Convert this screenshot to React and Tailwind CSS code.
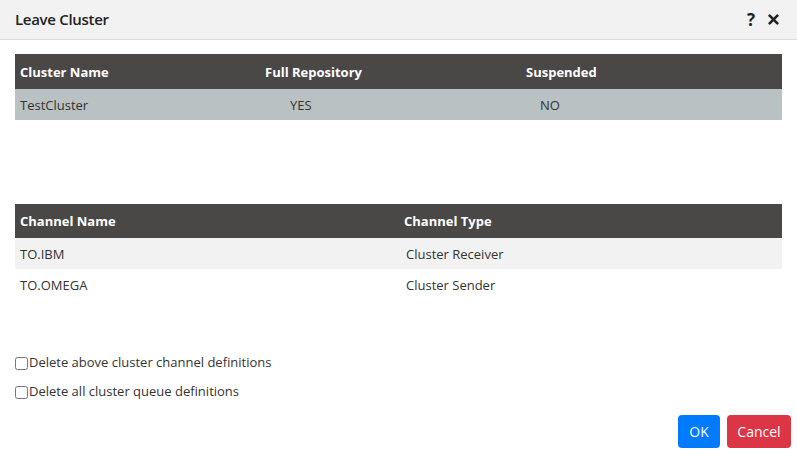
import React, { useState } from 'react';

const clusters = [{ name: 'TestCluster', full: 'YES', suspended: 'NO' }];

const channels = [
  { name: 'TO.IBM', type: 'Cluster Receiver' },
  { name: 'TO.OMEGA', type: 'Cluster Sender' },
];

const LeaveClusterDialog = () => {
  const [deleteChannels, setDeleteChannels] = useState(false);
  const [deleteQueues, setDeleteQueues] = useState(false);

  return (
    <div className="w-[797px] h-[453px] bg-white text-[#333] font-['Open_Sans',sans-serif] flex flex-col">
      {/* --- Title bar --- */}
      <div className="h-[40px] bg-[#f2f2f2] border-b border-[#dcdcdc] flex items-center justify-between pl-[15px] pr-[18px]">
        <h2 className="text-[15px] font-semibold text-[#222] tracking-[-0.3px]">Leave Cluster</h2>
        <div className="flex items-center gap-[13px] text-[#222]">
          <span className="text-[17px] font-bold leading-none">?</span>
          <svg width="11" height="11" viewBox="0 0 10 10">
            <path d="M1.5 1.5 L8.5 8.5 M8.5 1.5 L1.5 8.5" stroke="#222" strokeWidth="2.4" strokeLinecap="round" />
          </svg>
        </div>
      </div>

      {/* --- Cluster table --- */}
      <div className="mx-[15px] mt-[14px] text-[13px]">
        <div className="grid grid-cols-[245px_261px_1fr] h-[35px] items-center pt-[2px] bg-[#4a4747] text-white font-bold">
          <div className="pl-[5px]">Cluster Name</div>
          <div className="pl-[5px]">Full Repository</div>
          <div className="pl-[5px]">Suspended</div>
        </div>
        {clusters.map((c) => (
          <div key={c.name} className="grid grid-cols-[245px_261px_1fr] h-[31px] items-center pt-[3px] bg-[#b9c1c3]">
            <div className="pl-[5px]">{c.name}</div>
            <div className="pl-[30px]">{c.full}</div>
            <div className="pl-[19px]">{c.suspended}</div>
          </div>
        ))}
      </div>

      {/* --- Channel table --- */}
      <div className="mx-[15px] mt-[84px] text-[13px]">
        <div className="grid grid-cols-[384px_1fr] h-[34px] items-center pt-[1px] bg-[#4a4747] text-white font-bold">
          <div className="pl-[5px]">Channel Name</div>
          <div className="pl-[5px]">Channel Type</div>
        </div>
        {channels.map((ch, i) => (
          <div
            key={ch.name}
            className={`grid grid-cols-[384px_1fr] h-[31px] items-center pt-[3px] ${i % 2 === 0 ? 'bg-[#f2f2f2]' : 'bg-white'}`}
          >
            <div className="pl-[5px]">{ch.name}</div>
            <div className="pl-[7px]">{ch.type}</div>
          </div>
        ))}
      </div>

      {/* --- Options --- */}
      <div className="ml-[15px] mt-[54px] flex flex-col gap-[11px] text-[13px]">
        <label className="flex items-center h-[18px]">
          <input
            type="checkbox"
            checked={deleteChannels}
            onChange={(e) => setDeleteChannels(e.target.checked)}
            className="w-[13px] h-[13px] m-0 mr-px"
          />
          Delete above cluster channel definitions
        </label>
        <label className="flex items-center h-[18px]">
          <input
            type="checkbox"
            checked={deleteQueues}
            onChange={(e) => setDeleteQueues(e.target.checked)}
            className="w-[13px] h-[13px] m-0 mr-px"
          />
          Delete all cluster queue definitions
        </label>
      </div>

      {/* --- Footer buttons --- */}
      <div className="mt-[14px] flex justify-end gap-[7px] pr-[6px]">
        <button className="w-[42px] h-[33px] bg-[#007bff] text-white text-[14px] rounded-[4px]">OK</button>
        <button className="w-[64px] h-[33px] bg-[#dc3545] text-white text-[14px] rounded-[4px]">Cancel</button>
      </div>
    </div>
  );
};

export default function App() {
  return <LeaveClusterDialog />;
}
